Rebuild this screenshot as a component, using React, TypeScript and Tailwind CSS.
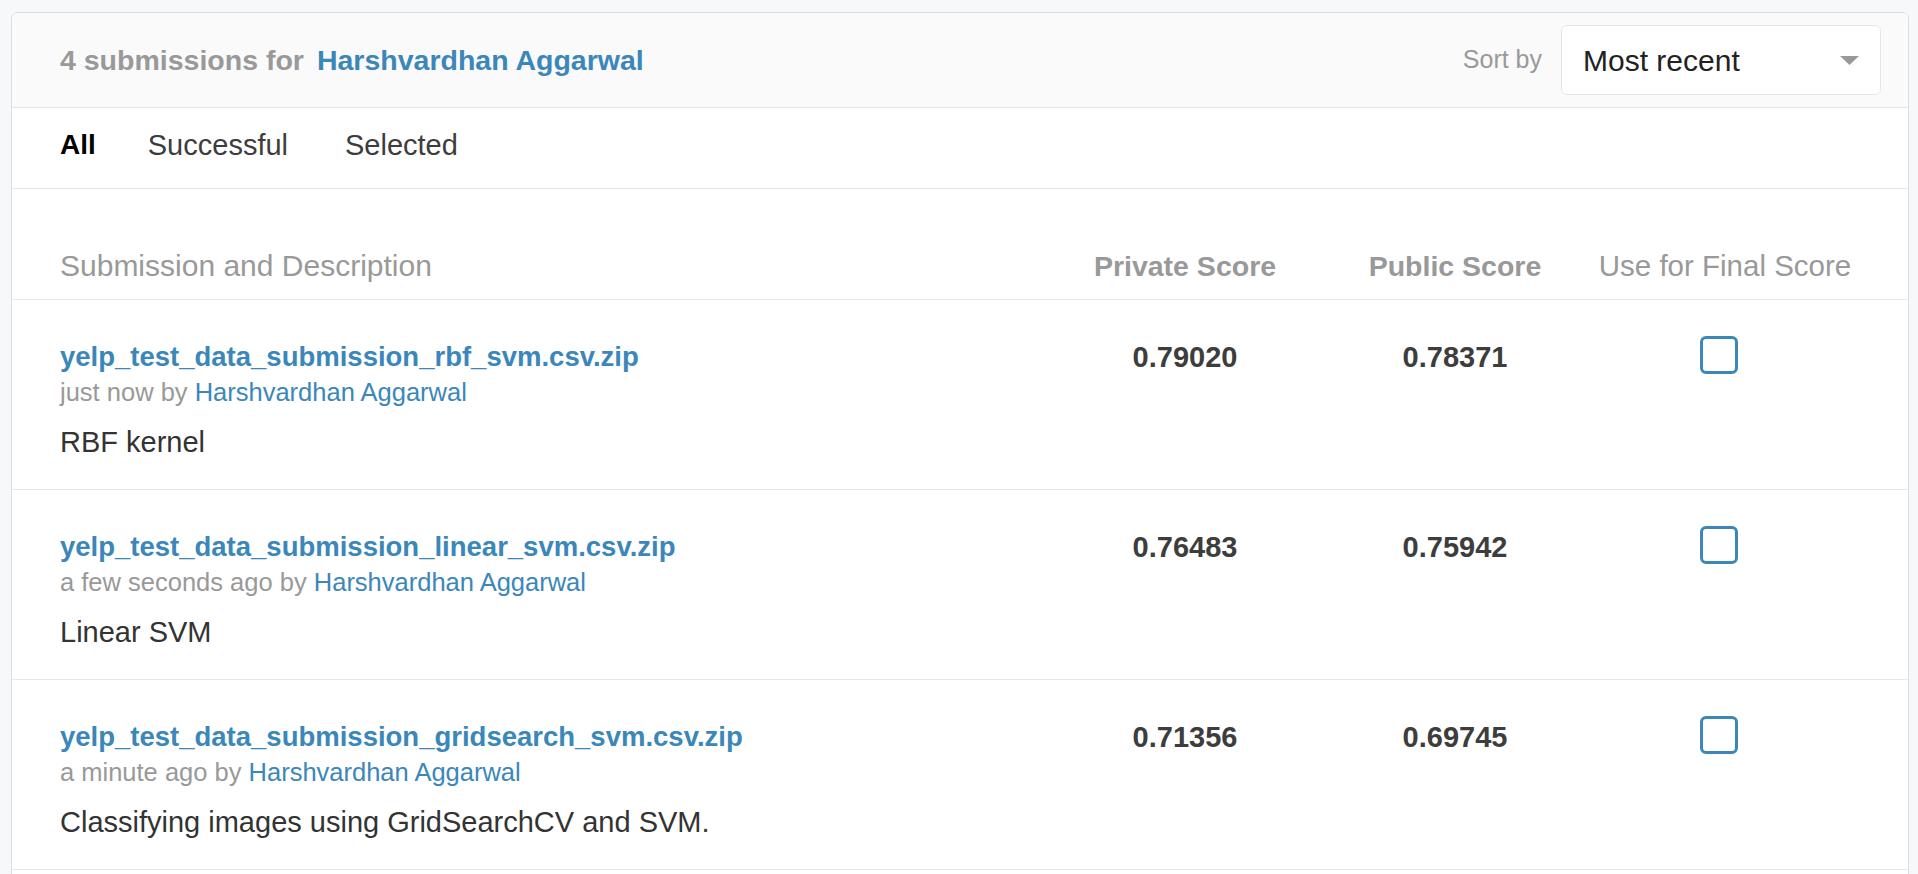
type Submission = {
  file: string;
  when: string;
  description: string;
  privateScore: string;
  publicScore: string;
};

const submissions: Submission[] = [
  {
    file: "yelp_test_data_submission_rbf_svm.csv.zip",
    when: "just now",
    description: "RBF kernel",
    privateScore: "0.79020",
    publicScore: "0.78371",
  },
  {
    file: "yelp_test_data_submission_linear_svm.csv.zip",
    when: "a few seconds ago",
    description: "Linear SVM",
    privateScore: "0.76483",
    publicScore: "0.75942",
  },
  {
    file: "yelp_test_data_submission_gridsearch_svm.csv.zip",
    when: "a minute ago",
    description: "Classifying images using GridSearchCV and SVM.",
    privateScore: "0.71356",
    publicScore: "0.69745",
  },
];

function SubmissionRow({ s }: { s: Submission }) {
  return (
    <div className="flex border-b border-[#e8e8e8] px-[48px]">
      <div className="flex-1 pt-[40px] pb-[27px]">
        <a className="block text-[27.5px] font-bold leading-[34px] text-[#3b87ba]">
          {s.file}
        </a>
        <div className="text-[25.5px] leading-[36px] text-[#999]">
          {s.when} by{" "}
          <a className="text-[#3b87ba]">Harshvardhan Aggarwal</a>
        </div>
        <p className="mt-[12px] text-[29px] leading-[40px] text-[#333]">
          {s.description}
        </p>
      </div>
      <div className="w-[270px] pt-[40px] text-center text-[29px] font-bold leading-[34px] text-[#3d3d3d]">
        {s.privateScore}
      </div>
      <div className="w-[270px] pt-[40px] text-center text-[29px] font-bold leading-[34px] text-[#3d3d3d]">
        {s.publicScore}
      </div>
      <div className="flex w-[270px] justify-center pt-[36px] pr-[12px]">
        <span className="block h-[38px] w-[38px] rounded-[6px] border-[3px] border-[#3b87ba] bg-white" />
      </div>
    </div>
  );
}

export default function App() {
  return (
    <div className="min-h-screen bg-[#f7f8fa] pt-[12px] pl-[11px] pr-[9px] font-['Liberation_Sans',Arial,sans-serif]">
      <div className="overflow-hidden rounded-t-[6px] border border-[#dcdcdc] bg-white pb-[40px]">
        {/* header */}
        <div className="flex items-center justify-between border-b border-[#e6e6e6] bg-[#fafafa] py-[12px] pl-[48px] pr-[27px]">
          <h2 className="text-[28.5px] font-bold text-[#999]">
            4 submissions for
            <a className="ml-[13px] text-[#3b87ba]">Harshvardhan Aggarwal</a>
          </h2>
          <div className="flex items-center gap-[19px]">
            <span className="text-[25px] text-[#999]">Sort by</span>
            <div className="flex h-[70px] w-[320px] items-center justify-between rounded-[6px] border border-[#e6e6e6] bg-white pl-[21px] pr-[21px]">
              <span className="text-[30px] text-[#222]">Most recent</span>
              <svg width="19" height="9" viewBox="0 0 19 9">
                <path d="M0 0h19L9.5 9z" fill="#999" />
              </svg>
            </div>
          </div>
        </div>

        {/* tabs */}
        <div className="flex border-b border-[#e6e6e6] pt-[22px] pb-[28px] pl-[48px] leading-[30px]">
          <span className="mr-[52px] text-[28px] font-bold text-black">All</span>
          <span className="mr-[57px] text-[29px] text-[#3d3d3d]">Successful</span>
          <span className="text-[29px] text-[#3d3d3d]">Selected</span>
        </div>

        {/* column headings */}
        <div className="flex border-b border-[#e8e8e8] px-[48px] pt-[57px] pb-[13px] leading-[40px] text-[#999]">
          <div className="flex-1 text-[30px]">Submission and Description</div>
          <div className="w-[270px] text-center text-[28.5px] font-bold">Private Score</div>
          <div className="w-[270px] text-center text-[28.5px] font-bold">Public Score</div>
          <div className="w-[270px] text-center text-[29.5px]">Use for Final Score</div>
        </div>

        {submissions.map((s) => (
          <SubmissionRow key={s.file} s={s} />
        ))}
      </div>
    </div>
  );
}
